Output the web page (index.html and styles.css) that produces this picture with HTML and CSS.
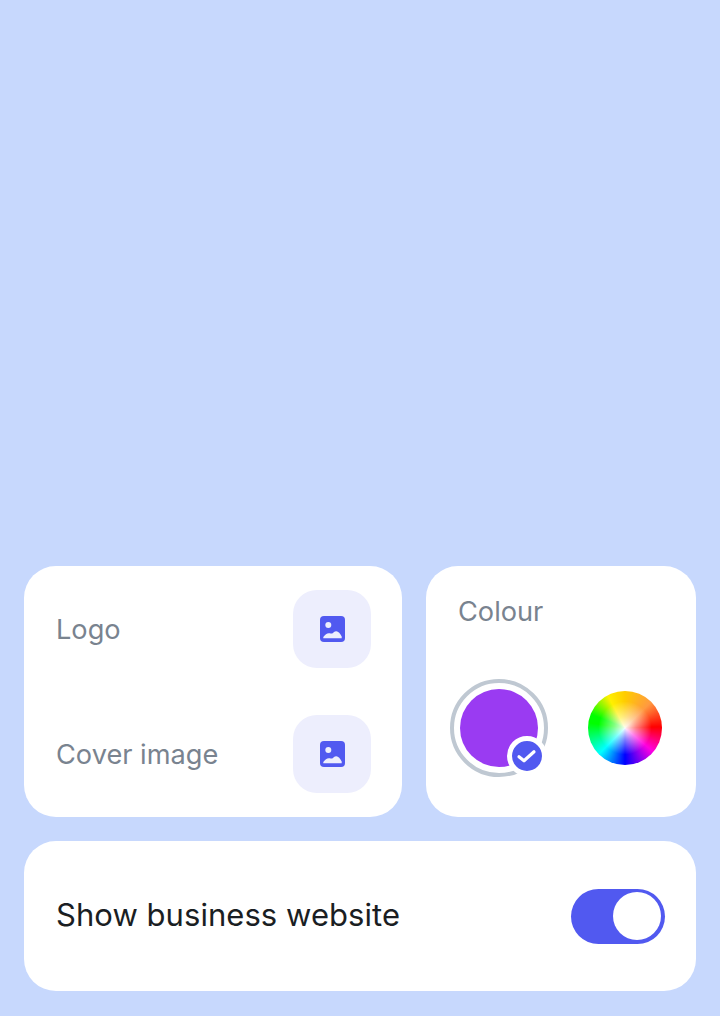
FILE: index.html
```html
<!DOCTYPE html>
<html lang="en">
<head>
<meta charset="utf-8">
<title>Settings</title>
<link rel="stylesheet" href="styles.css">
</head>
<body>
<main class="panel">
  <div class="row">
    <section class="card media">
      <div class="media-row">
        <span class="label row-label">Logo</span>
        <button class="upload" aria-label="Upload logo">
          <svg width="25" height="26" viewBox="0 0 25 26"><rect width="25" height="26" rx="4" fill="#5159F0"/><circle cx="8.300" cy="9" r="3" fill="#EDEEFD"/><path d="M3.300 22.300V21c1.800-2.300 3.500-3.500 5.500-3.700 1.500-.1 2.200.4 3 .3 1.300-.2 2.400-2.400 4.500-2.400 2 0 4 2.500 5.400 5.400v1.700z" fill="#EDEEFD"/></svg>
        </button>
      </div>
      <div class="media-row">
        <span class="label row-label">Cover image</span>
        <button class="upload" aria-label="Upload cover image">
          <svg width="25" height="26" viewBox="0 0 25 26"><rect width="25" height="26" rx="4" fill="#5159F0"/><circle cx="8.300" cy="9" r="3" fill="#EDEEFD"/><path d="M3.300 22.300V21c1.800-2.300 3.500-3.500 5.500-3.700 1.500-.1 2.200.4 3 .3 1.300-.2 2.400-2.400 4.500-2.400 2 0 4 2.500 5.400 5.400v1.700z" fill="#EDEEFD"/></svg>
        </button>
      </div>
    </section>
    <section class="card colour">
      <span class="label colour-label">Colour</span>
      <div class="swatches">
        <div class="swatch-ring">
          <div class="swatch"></div>
          <span class="check">
            <svg width="24" height="24" viewBox="0 0 24 24"><path d="M4 12.800l5 4L19 7.800" fill="none" stroke="#fff" stroke-width="3.200" stroke-linecap="round" stroke-linejoin="round"/></svg>
          </span>
        </div>
        <div class="wheel"></div>
      </div>
    </section>
  </div>
  <section class="card website">
    <span class="website-label">Show business website</span>
    <div class="toggle"><span class="knob"></span></div>
  </section>
</main>
</body>
</html>
```
FILE: styles.css
```css
* { box-sizing: border-box; }
html, body { margin: 0; height: 100%; }
body {
  background: #C7D8FD;
  font-family: Inter, "Liberation Sans", sans-serif;
  display: flex;
  flex-direction: column;
  justify-content: flex-end;
  padding: 0 24px 25px;
}
.panel { display: flex; flex-direction: column; gap: 24px; }
.row { display: flex; gap: 24px; }
.card { background: #fff; border-radius: 32px; }
.media {
  width: 378px;
  height: 251px;
  padding: 24px 31px 24px 32px;
  display: flex;
  flex-direction: column;
  justify-content: space-between;
}
.media-row { display: flex; align-items: center; justify-content: space-between; }
.label { font-size: 27.2px; line-height: 36px; color: #79838F; }
.row-label { padding-top: 2px; }
.upload {
  width: 78px;
  height: 78px;
  border: 0;
  padding: 0;
  border-radius: 24px;
  background: #EDEEFD;
  display: flex;
  align-items: center;
  justify-content: center;
}
.colour { width: 270px; height: 251px; padding: 28px 32px 0 23.5px; }
.colour-label { display: block; padding-left: 8.5px; }
.swatches { display: flex; align-items: center; justify-content: space-between; margin-top: 49px; }
.swatch-ring {
  position: relative;
  width: 98px;
  height: 98px;
  border: 4px solid #BFC8D2;
  border-radius: 50%;
  padding: 6px;
}
.swatch { width: 78px; height: 78px; border-radius: 50%; background: #9A3BF2; }
.check {
  position: absolute;
  right: -3px;
  bottom: -3px;
  width: 40px;
  height: 40px;
  border: 5px solid #fff;
  border-radius: 50%;
  background: #5159F0;
  display: flex;
  align-items: center;
  justify-content: center;
}
.wheel {
  width: 74px;
  height: 74px;
  margin-right: 2px;
  border-radius: 50%;
  background:
    radial-gradient(circle closest-side, rgba(255,255,255,.95) 0, rgba(255,255,255,.5) 30%, rgba(255,255,255,0) 72%),
    conic-gradient(from 0deg, #FFCC00 0deg, #FF9A40 45deg, #FF0000 88deg, #FF00E0 130deg, #0000FF 180deg, #00FFFF 225deg, #00FF00 278deg, #00FF00 292deg, #FFF000 332deg, #FFCC00 360deg);
}
.website {
  height: 150px;
  padding: 0 31px 0 32px;
  display: flex;
  align-items: center;
  justify-content: space-between;
}
.website-label { font-size: 31px; letter-spacing: .05px; line-height: 36px; margin-top: -2px; color: #1A1E23; }
.toggle {
  width: 94px;
  height: 55px;
  border-radius: 28px;
  background: #5159F0;
  display: flex;
  align-items: center;
  justify-content: flex-end;
  padding-right: 4px;
}
.knob { width: 48px; height: 48px; border-radius: 50%; background: #fff; }
```
